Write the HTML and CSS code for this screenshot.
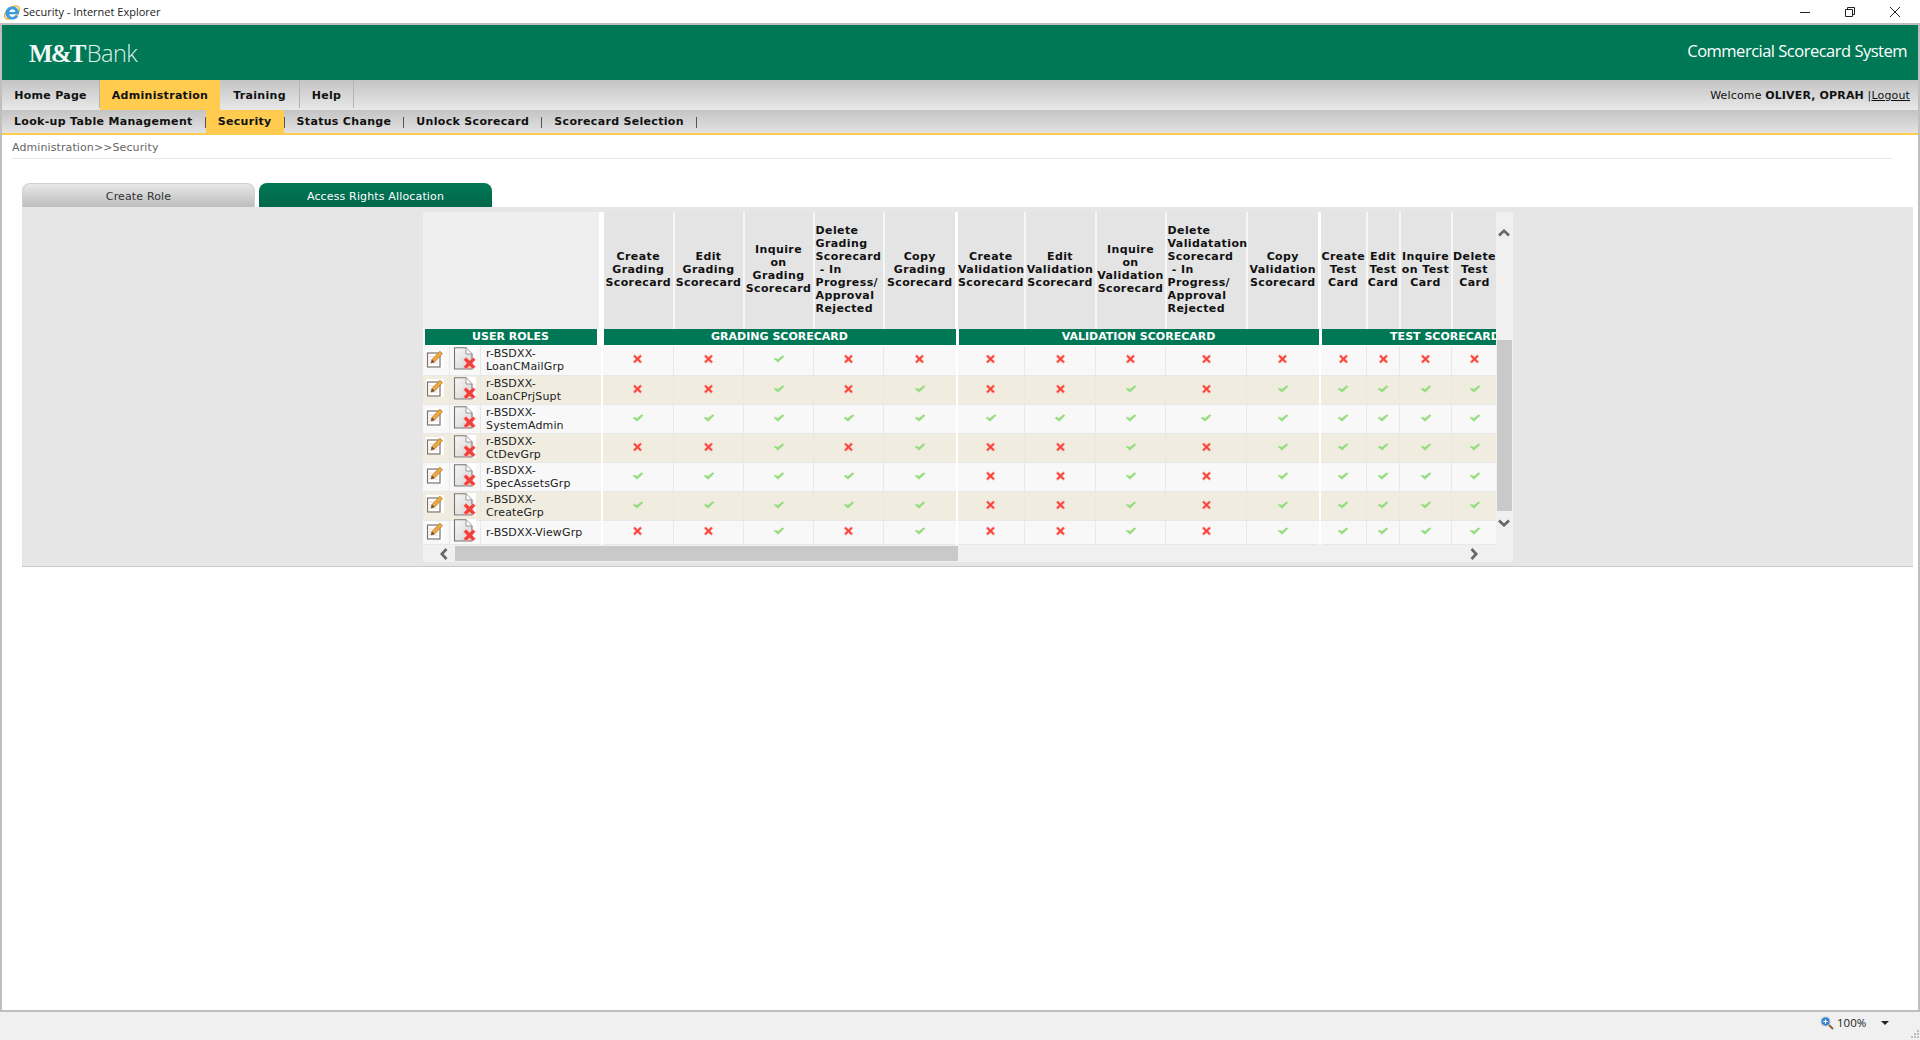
FILE: index.html
```html
<!DOCTYPE html>
<html lang="en">
<head>
  <meta charset="UTF-8">
  <title>Security - Internet Explorer</title>
  <link rel="stylesheet" href="styles.css">
</head>
<body>
  <svg class="defs" width="0" height="0">
    <symbol id="no" viewBox="0 0 11 10">
      <path d="M1.200 2.300 2.800 .8 5.500 3.200 8.200 .8 9.800 2.300 7.300 5 9.800 7.700 8.200 9.200 5.500 6.800 2.800 9.200 1.200 7.700 3.700 5Z" fill="#f8443a" stroke="#fbaaa2" stroke-width=".8"/>
    </symbol>
    <symbol id="yes" viewBox="0 0 13 9">
      <path d="M.6 4.300 3 3.300 5.200 4.900 10.400.7 12.400 1.800 5.400 8.400Z" fill="#92dc7a" stroke="#c0e6b2" stroke-width=".5"/>
    </symbol>
    <symbol id="edit" viewBox="0 0 18 18">
      <rect width="18" height="18" fill="#fff"/>
      <rect x="1.500" y="3" width="12.500" height="14" fill="#fff" stroke="#77736e" stroke-width="1.200"/>
      <path d="M3 7h9M3 10h9M3 13h9" stroke="#f0c8c8" stroke-width=".8"/>
      <path d="M5 13 6 9.600 13.800 1.200 16.600 3.600 8.600 12Z" fill="#eea93c" stroke="#a8742a" stroke-width=".7"/>
      <path d="M5 13 6 9.600 8.600 12Z" fill="#5c5048"/>
    </symbol>
    <symbol id="del" viewBox="0 0 23 23">
      <defs>
        <linearGradient id="page" x1="0" y1="0" x2="1" y2="1">
          <stop offset="0" stop-color="#f7f7f7"/>
          <stop offset="1" stop-color="#d4d4d4"/>
        </linearGradient>
      </defs>
      <rect x="1" width="22" height="23" fill="#fff"/>
      <path d="M1.500 .8H13L19 7V22H1.500Z" fill="url(#page)" stroke="#77736e" stroke-width="1.100"/>
      <path d="M13 .8V7H19" fill="#fff" stroke="#9a9692" stroke-width="1"/>
      <path d="M10.500 12.800 13 10.300 16.500 13.500 20 10.300 22.500 12.800 19.300 16.300 22.500 19.800 20 22.300 16.500 19.100 13 22.300 10.500 19.800 13.700 16.300Z" fill="#f0403a" stroke="#fbb" stroke-width=".7"/>
    </symbol>
    <symbol id="up" viewBox="0 0 12 8">
      <path d="M1 6.500 6 1.800 11 6.500" fill="none" stroke="#666" stroke-width="2.700"/>
    </symbol>
  </svg>

  <div class="titlebar">
    <svg class="ie-icon" viewBox="0 0 18 18">
      <ellipse cx="9" cy="9.500" rx="8.600" ry="5" transform="rotate(-38 9 9.500)" fill="none" stroke="#f3b72f" stroke-width="1.500"/>
      <path d="M9.500 3.500C5.600 3.500 2.500 6.400 2.500 10.200S5.600 16.500 9.500 16.500C12.300 16.500 14.500 15 15.500 12.500H12.200C11.600 13.500 10.700 14 9.500 14 7.800 14 6.500 12.900 6.300 11.200H16V10C16 6.400 13.300 3.500 9.500 3.500ZM6.400 8.900C6.700 7.300 7.900 6.300 9.400 6.300 11 6.300 12.100 7.300 12.300 8.900Z" fill="#3a9be0"/>
    </svg>
    <span class="title-text">Security - Internet Explorer</span>
    <div class="win-btns">
      <svg viewBox="0 0 12 12"><path d="M1 6.500H11" stroke="#222" stroke-width="1"/></svg>
      <svg viewBox="0 0 12 12"><path d="M1.500 3.500H8.500V10.500H1.500ZM3.500 3.500V1.500H10.500V8.500H8.500" fill="none" stroke="#222" stroke-width="1"/></svg>
      <svg viewBox="0 0 12 12"><path d="M1 1 11 11M11 1 1 11" stroke="#222" stroke-width="1"/></svg>
    </div>
  </div>

  <div class="window">
    <div class="banner">
      <div class="logo"><span class="logo-mt">M&amp;T</span><span class="logo-bank">Bank</span></div>
      <div class="app-name">Commercial Scorecard System</div>
    </div>

    <div class="mainnav">
      <a class="main-item home">Home Page</a>
      <a class="main-item admin active">Administration</a>
      <a class="main-item training">Training</a>
      <a class="main-item help">Help</a>
      <div class="welcome">Welcome <b>OLIVER, OPRAH</b> |<u>Logout</u></div>
    </div>

    <div class="subnav">
      <a class="sub-item lookup">Look-up Table Management</a>
      <i class="sep"></i>
      <a class="sub-item active">Security</a>
      <i class="sep"></i>
      <a class="sub-item">Status Change</a>
      <i class="sep"></i>
      <a class="sub-item">Unlock Scorecard</a>
      <i class="sep"></i>
      <a class="sub-item">Scorecard Selection</a>
      <i class="sep"></i>
    </div>

    <div class="crumbs">Administration&gt;&gt;Security</div>

    <div class="tabs">
      <a class="tab">Create Role</a>
      <a class="tab tab-on">Access Rights Allocation</a>
    </div>

    <div class="panel">
      <div class="scroller">
        <div class="table-clip">
          <table class="grid">
            <colgroup>
              <col class="c27"><col class="c31"><col class="c121">
              <col class="c72"><col class="c70"><col class="c70"><col class="c70"><col class="c73">
              <col class="c68"><col class="c71"><col class="c70"><col class="c81"><col class="c73">
              <col class="c47"><col class="c33"><col class="c52"><col class="c46"><col class="c72">
            </colgroup>
            <thead>
              <tr class="heads">
                <th colspan="3" class="blank end"></th>
                <th>Create<br>Grading<br>Scorecard</th>
                <th>Edit<br>Grading<br>Scorecard</th>
                <th>Inquire<br>on<br>Grading<br>Scorecard</th>
                <th class="left">Delete<br>Grading<br>Scorecard<br>&nbsp;- In<br>Progress/<br>Approval<br>Rejected</th>
                <th class="end">Copy<br>Grading<br>Scorecard</th>
                <th>Create<br>Validation<br>Scorecard</th>
                <th>Edit<br>Validation<br>Scorecard</th>
                <th>Inquire<br>on<br>Validation<br>Scorecard</th>
                <th class="left">Delete<br>Validatation<br>Scorecard<br>&nbsp;- In<br>Progress/<br>Approval<br>Rejected</th>
                <th class="end">Copy<br>Validation<br>Scorecard</th>
                <th>Create<br>Test<br>Card</th>
                <th>Edit<br>Test<br>Card</th>
                <th>Inquire<br>on Test<br>Card</th>
                <th>Delete<br>Test<br>Card</th>
                <th>Copy<br>Test<br>Card</th>
              </tr>
              <tr class="bands">
                <th colspan="3" class="band-roles"><span>USER ROLES</span></th>
                <th colspan="5"><span>GRADING SCORECARD</span></th>
                <th colspan="5"><span>VALIDATION SCORECARD</span></th>
                <th colspan="5"><span>TEST SCORECARD</span></th>
              </tr>
            </thead>
            <tbody>
              <tr>
                <td class="ic"><svg class="i-edit"><use href="#edit"/></svg></td><td class="ic"><svg class="i-del"><use href="#del"/></svg></td><td class="role end">r-BSDXX-<br>LoanCMailGrp</td>
                <td><svg class="no"><use href="#no"/></svg></td><td><svg class="no"><use href="#no"/></svg></td><td><svg class="yes"><use href="#yes"/></svg></td><td><svg class="no"><use href="#no"/></svg></td><td class="end"><svg class="no"><use href="#no"/></svg></td>
                <td><svg class="no"><use href="#no"/></svg></td><td><svg class="no"><use href="#no"/></svg></td><td><svg class="no"><use href="#no"/></svg></td><td><svg class="no"><use href="#no"/></svg></td><td class="end"><svg class="no"><use href="#no"/></svg></td>
                <td><svg class="no"><use href="#no"/></svg></td><td><svg class="no"><use href="#no"/></svg></td><td><svg class="no"><use href="#no"/></svg></td><td><svg class="no"><use href="#no"/></svg></td><td><svg class="no"><use href="#no"/></svg></td>
              </tr>
              <tr>
                <td class="ic"><svg class="i-edit"><use href="#edit"/></svg></td><td class="ic"><svg class="i-del"><use href="#del"/></svg></td><td class="role end">r-BSDXX-<br>LoanCPrjSupt</td>
                <td><svg class="no"><use href="#no"/></svg></td><td><svg class="no"><use href="#no"/></svg></td><td><svg class="yes"><use href="#yes"/></svg></td><td><svg class="no"><use href="#no"/></svg></td><td class="end"><svg class="yes"><use href="#yes"/></svg></td>
                <td><svg class="no"><use href="#no"/></svg></td><td><svg class="no"><use href="#no"/></svg></td><td><svg class="yes"><use href="#yes"/></svg></td><td><svg class="no"><use href="#no"/></svg></td><td class="end"><svg class="yes"><use href="#yes"/></svg></td>
                <td><svg class="yes"><use href="#yes"/></svg></td><td><svg class="yes"><use href="#yes"/></svg></td><td><svg class="yes"><use href="#yes"/></svg></td><td><svg class="yes"><use href="#yes"/></svg></td><td><svg class="yes"><use href="#yes"/></svg></td>
              </tr>
              <tr>
                <td class="ic"><svg class="i-edit"><use href="#edit"/></svg></td><td class="ic"><svg class="i-del"><use href="#del"/></svg></td><td class="role end">r-BSDXX-<br>SystemAdmin</td>
                <td><svg class="yes"><use href="#yes"/></svg></td><td><svg class="yes"><use href="#yes"/></svg></td><td><svg class="yes"><use href="#yes"/></svg></td><td><svg class="yes"><use href="#yes"/></svg></td><td class="end"><svg class="yes"><use href="#yes"/></svg></td>
                <td><svg class="yes"><use href="#yes"/></svg></td><td><svg class="yes"><use href="#yes"/></svg></td><td><svg class="yes"><use href="#yes"/></svg></td><td><svg class="yes"><use href="#yes"/></svg></td><td class="end"><svg class="yes"><use href="#yes"/></svg></td>
                <td><svg class="yes"><use href="#yes"/></svg></td><td><svg class="yes"><use href="#yes"/></svg></td><td><svg class="yes"><use href="#yes"/></svg></td><td><svg class="yes"><use href="#yes"/></svg></td><td><svg class="yes"><use href="#yes"/></svg></td>
              </tr>
              <tr>
                <td class="ic"><svg class="i-edit"><use href="#edit"/></svg></td><td class="ic"><svg class="i-del"><use href="#del"/></svg></td><td class="role end">r-BSDXX-<br>CtDevGrp</td>
                <td><svg class="no"><use href="#no"/></svg></td><td><svg class="no"><use href="#no"/></svg></td><td><svg class="yes"><use href="#yes"/></svg></td><td><svg class="no"><use href="#no"/></svg></td><td class="end"><svg class="yes"><use href="#yes"/></svg></td>
                <td><svg class="no"><use href="#no"/></svg></td><td><svg class="no"><use href="#no"/></svg></td><td><svg class="yes"><use href="#yes"/></svg></td><td><svg class="no"><use href="#no"/></svg></td><td class="end"><svg class="yes"><use href="#yes"/></svg></td>
                <td><svg class="yes"><use href="#yes"/></svg></td><td><svg class="yes"><use href="#yes"/></svg></td><td><svg class="yes"><use href="#yes"/></svg></td><td><svg class="yes"><use href="#yes"/></svg></td><td><svg class="yes"><use href="#yes"/></svg></td>
              </tr>
              <tr>
                <td class="ic"><svg class="i-edit"><use href="#edit"/></svg></td><td class="ic"><svg class="i-del"><use href="#del"/></svg></td><td class="role end">r-BSDXX-<br>SpecAssetsGrp</td>
                <td><svg class="yes"><use href="#yes"/></svg></td><td><svg class="yes"><use href="#yes"/></svg></td><td><svg class="yes"><use href="#yes"/></svg></td><td><svg class="yes"><use href="#yes"/></svg></td><td class="end"><svg class="yes"><use href="#yes"/></svg></td>
                <td><svg class="no"><use href="#no"/></svg></td><td><svg class="no"><use href="#no"/></svg></td><td><svg class="yes"><use href="#yes"/></svg></td><td><svg class="no"><use href="#no"/></svg></td><td class="end"><svg class="yes"><use href="#yes"/></svg></td>
                <td><svg class="yes"><use href="#yes"/></svg></td><td><svg class="yes"><use href="#yes"/></svg></td><td><svg class="yes"><use href="#yes"/></svg></td><td><svg class="yes"><use href="#yes"/></svg></td><td><svg class="yes"><use href="#yes"/></svg></td>
              </tr>
              <tr>
                <td class="ic"><svg class="i-edit"><use href="#edit"/></svg></td><td class="ic"><svg class="i-del"><use href="#del"/></svg></td><td class="role end">r-BSDXX-<br>CreateGrp</td>
                <td><svg class="yes"><use href="#yes"/></svg></td><td><svg class="yes"><use href="#yes"/></svg></td><td><svg class="yes"><use href="#yes"/></svg></td><td><svg class="yes"><use href="#yes"/></svg></td><td class="end"><svg class="yes"><use href="#yes"/></svg></td>
                <td><svg class="no"><use href="#no"/></svg></td><td><svg class="no"><use href="#no"/></svg></td><td><svg class="yes"><use href="#yes"/></svg></td><td><svg class="no"><use href="#no"/></svg></td><td class="end"><svg class="yes"><use href="#yes"/></svg></td>
                <td><svg class="yes"><use href="#yes"/></svg></td><td><svg class="yes"><use href="#yes"/></svg></td><td><svg class="yes"><use href="#yes"/></svg></td><td><svg class="yes"><use href="#yes"/></svg></td><td><svg class="yes"><use href="#yes"/></svg></td>
              </tr>
              <tr class="last">
                <td class="ic"><svg class="i-edit"><use href="#edit"/></svg></td><td class="ic"><svg class="i-del"><use href="#del"/></svg></td><td class="role end">r-BSDXX-ViewGrp</td>
                <td><svg class="no"><use href="#no"/></svg></td><td><svg class="no"><use href="#no"/></svg></td><td><svg class="yes"><use href="#yes"/></svg></td><td><svg class="no"><use href="#no"/></svg></td><td class="end"><svg class="yes"><use href="#yes"/></svg></td>
                <td><svg class="no"><use href="#no"/></svg></td><td><svg class="no"><use href="#no"/></svg></td><td><svg class="yes"><use href="#yes"/></svg></td><td><svg class="no"><use href="#no"/></svg></td><td class="end"><svg class="yes"><use href="#yes"/></svg></td>
                <td><svg class="yes"><use href="#yes"/></svg></td><td><svg class="yes"><use href="#yes"/></svg></td><td><svg class="yes"><use href="#yes"/></svg></td><td><svg class="yes"><use href="#yes"/></svg></td><td><svg class="yes"><use href="#yes"/></svg></td>
              </tr>
            </tbody>
          </table>
        </div>
        <div class="vbar">
          <svg class="arrow"><use href="#up"/></svg>
          <div class="vthumb"></div>
          <svg class="arrow flip"><use href="#up"/></svg>
        </div>
        <div class="hbar">
          <svg class="arrow turn-left"><use href="#up"/></svg>
          <div class="hthumb"></div>
          <svg class="arrow turn-right"><use href="#up"/></svg>
        </div>
      </div>
    </div>
    <div class="page-fill"></div>
  </div>

  <div class="statusbar">
    <svg class="zoom-icon" viewBox="0 0 14 14">
      <circle cx="5.500" cy="5.500" r="4.500" fill="#2a7fd0" stroke="#b8c6d4" stroke-width="1.200"/>
      <path d="M3.200 5.500H7.800M5.500 3.200V7.800" stroke="#fff" stroke-width="1.200"/>
      <path d="M9 9 13 13" stroke="#8a5a2c" stroke-width="2"/>
    </svg>
    <span class="zoom-text">100%</span>
    <i class="caret"></i>
    <svg class="grip" viewBox="0 0 10 10">
      <path d="M7 1h2v2H7ZM4 4h2v2H4ZM7 4h2v2H7ZM1 7h2v2H1ZM4 7h2v2H4ZM7 7h2v2H7Z" fill="#bdbdbd"/>
    </svg>
  </div>
</body>
</html>
```

FILE: styles.css
```css
html, body {
  height: 100%;
}
body {
  margin: 0;
  display: flex;
  flex-direction: column;
  height: 1040px;
  overflow: hidden;
  background-color: #fff;
  font-family: "DejaVu Sans", Verdana, sans-serif;
  font-size: 11px;
  color: #111;
}
.defs {
  position: absolute;
}

/* window chrome */
.titlebar {
  height: 23px;
  display: flex;
  align-items: center;
  flex: none;
}
.ie-icon {
  width: 18px;
  height: 18px;
  margin-left: 3px;
}
.title-text {
  margin-left: 2px;
  font-family: "Open Sans", sans-serif;
  font-size: 11px;
  color: #222;
}
.win-btns {
  margin-left: auto;
  margin-right: 19px;
  display: flex;
  gap: 33px;
}
.win-btns svg {
  width: 12px;
  height: 12px;
}
.window {
  flex: 1;
  display: flex;
  flex-direction: column;
  border: 2px solid #bfbfbf;
}
.statusbar {
  flex: none;
  height: 28px;
  box-sizing: border-box;
  padding-bottom: 7px;
  background-color: #f0f0f0;
  display: flex;
  align-items: center;
  font-family: "Open Sans", sans-serif;
  font-size: 11.500px;
  color: #222;
}

/* banner */
.banner {
  height: 55px;
  flex: none;
  background-color: #007856;
  display: flex;
  align-items: center;
  justify-content: space-between;
  color: #fff;
  padding: 0 11px 0 27px;
}
.logo {
  display: flex;
  align-items: baseline;
  color: #dff0ea;
}
.logo-mt {
  font-family: "Liberation Serif", serif;
  font-weight: bold;
  font-size: 25px;
  letter-spacing: -1.800px;
  color: #f2f8f6;
}
.logo-bank {
  font-family: "Open Sans", sans-serif;
  font-weight: 300;
  font-size: 23.500px;
  letter-spacing: -0.500px;
  margin-left: 2px;
}
.app-name {
  font-family: "Open Sans", sans-serif;
  font-weight: 400;
  font-size: 16.500px;
  letter-spacing: -0.500px;
  margin-bottom: 5px;
}

/* main navigation */
.mainnav {
  height: 30px;
  flex: none;
  display: flex;
  background: linear-gradient(#c4c4c4, #e8e8e8);
  font-weight: bold;
  letter-spacing: .3px;
}
.main-item {
  display: flex;
  align-items: center;
  justify-content: center;
  box-sizing: border-box;
  padding-top: 2px;
  border-right: 1px solid #b4b4b4;
  margin-bottom: 2px;
}
.home {
  width: 98px;
}
.admin {
  width: 120px;
}
.training {
  width: 80px;
}
.help {
  width: 54px;
}
.main-item.active {
  background-color: #ffcc4f;
  border-right: none;
  margin-bottom: 0;
  padding-top: 0;
}
.welcome {
  margin-left: auto;
  margin-right: 8px;
  align-self: center;
  padding-top: 1px;
  font-weight: normal;
  font-size: 11px;
  letter-spacing: .15px;
}

/* sub navigation */
.subnav {
  height: 25px;
  flex: none;
  display: flex;
  align-items: stretch;
  background: linear-gradient(#c4c4c4, #e2e2e2);
  border-bottom: 2px solid #ffcc4f;
  box-sizing: border-box;
  font-weight: bold;
  letter-spacing: .32px;
  padding-left: 12px;
}
.sub-item {
  display: flex;
  align-items: center;
  padding: 0 12px;
}
.lookup {
  padding-left: 0;
}
.sub-item.active {
  background-color: #ffcc4f;
}
.sep {
  width: 1px;
  height: 11px;
  margin-top: 7px;
  background-color: #555;
}

/* breadcrumb and tabs */
.crumbs {
  flex: none;
  height: 23px;
  margin: 0 26px 0 10px;
  border-bottom: 1px solid #e6e6e6;
  line-height: 25px;
  letter-spacing: .1px;
  color: #666;
}
.tabs {
  flex: none;
  display: flex;
  gap: 4px;
  margin: 24px 0 0 20px;
  height: 24px;
}
.tab {
  width: 233px;
  display: flex;
  align-items: center;
  justify-content: center;
  border-radius: 8px 8px 0 0;
  background: linear-gradient(#e8e8e8, #bdbdbd);
  color: #333;
  box-sizing: border-box;
  border: 1px solid #d0d0d0;
  border-bottom: none;
  padding-top: 2px;
  letter-spacing: .15px;
}
.tab-on {
  background: linear-gradient(#007856, #00674a);
  border: none;
  color: #fff;
}

/* rights table */
.panel {
  flex: none;
  height: 360px;
  margin: 0 5px 0 20px;
  box-sizing: border-box;
  padding-top: 5px;
  background-color: #e6e6e6;
  border-bottom: 1px solid #c8c8c8;
  display: flex;
  justify-content: center;
}
.scroller {
  width: 1090px;
  height: 350px;
  display: grid;
  grid-template-columns: 1073px 17px;
  grid-template-rows: 333px 17px;
  background-color: #f0f0f0;
}
.table-clip {
  overflow: hidden;
  background-color: #fff;
}
.grid {
  table-layout: fixed;
  width: 1147px;
  border-collapse: collapse;
}
.c27 { width: 27px; }
.c31 { width: 31px; }
.c121 { width: 121px; }
.c70 { width: 70px; }
.c72 { width: 72px; }
.c73 { width: 73px; }
.c68 { width: 68px; }
.c71 { width: 71px; }
.c81 { width: 81px; }
.c47 { width: 47px; }
.c33 { width: 33px; }
.c52 { width: 52px; }
.c46 { width: 46px; }
.grid th, .grid td {
  padding: 0;
  text-align: center;
}
.heads th {
  height: 114px;
  padding-bottom: 3px;
  background-color: #e4e4e4;
  border-right: 2px solid #f6f6f6;
  line-height: 13px;
  font-size: 11px;
  letter-spacing: .4px;
  color: #111;
  white-space: nowrap;
}
.heads th.left {
  text-align: left;
  padding-left: 1px;
}
.heads th.blank {
  background-color: #efefef;
  border-right-width: 5px;
}
.heads th.end {
  border-right: 3px solid #fff;
}
.heads th.blank.end {
  border-right-width: 5px;
}
.bands th {
  height: 16px;
  background-color: #fff;
  padding: 0 1px 1px 2px;
  vertical-align: top;
}
.bands .band-roles {
  padding: 0 5px 1px 2px;
}
.bands span {
  display: block;
  height: 16px;
  line-height: 16px;
  background-color: #007856;
  color: #fff;
  font-size: 11px;
}
tbody tr {
  height: 29px;
  background-color: #f8f8f8;
}
tbody tr:nth-child(even) {
  background-color: #f0ede0;
}
tbody tr.last {
  height: 24px;
}
.grid td {
  border-right: 1px solid #e8e8e8;
  border-bottom: 1px solid #e8e8e8;
  line-height: 13px;
}
.grid td.end {
  border-right: 2px solid #fff;
}
.grid td.role {
  text-align: left;
  padding-left: 5px;
  letter-spacing: .15px;
  color: #222;
  white-space: nowrap;
}
.no {
  width: 11px;
  height: 10px;
  display: block;
  margin: -2px auto 0;
}
.yes {
  width: 12px;
  height: 8px;
  display: block;
  margin: -2px auto 0;
}
.i-edit {
  width: 18px;
  height: 18px;
  display: block;
  margin: -3px 0 0 3px;
}
.i-del {
  width: 23px;
  height: 23px;
  display: block;
  margin: -3px 0 0 3px;
}

/* scrollbars */
.vbar {
  grid-column: 2;
  grid-row: 1 / 3;
  height: 333px;
  display: flex;
  flex-direction: column;
  align-items: center;
}
.vthumb {
  width: 15px;
  height: 171px;
  margin: 103px 0 8px;
  background-color: #c9c9c9;
}
.arrow {
  width: 12px;
  height: 8px;
  flex: none;
}
.vbar .arrow:first-child {
  margin-top: 17px;
}
.flip {
  transform: rotate(180deg);
}
.hbar {
  grid-column: 1;
  grid-row: 2;
  display: flex;
  align-items: center;
  background-color: #f0f0f0;
}
.hthumb {
  width: 503px;
  height: 15px;
  margin: 0 auto 0 5px;
  background-color: #c9c9c9;
}
.turn-left {
  transform: rotate(-90deg);
  margin-left: 15px;
}
.turn-right {
  transform: rotate(90deg);
  margin-right: 16px;
}
.page-fill {
  flex: 1;
}

/* status bar */
.zoom-icon {
  width: 14px;
  height: 14px;
  margin-left: 1820px;
}
.zoom-text {
  margin-left: 3px;
}
.caret {
  width: 0;
  height: 0;
  margin-left: 15px;
  border-left: 4px solid transparent;
  border-right: 4px solid transparent;
  border-top: 4px solid #222;
}
.grip {
  width: 10px;
  height: 10px;
  margin-left: auto;
  align-self: flex-end;
  margin-bottom: -6px;
}
```
